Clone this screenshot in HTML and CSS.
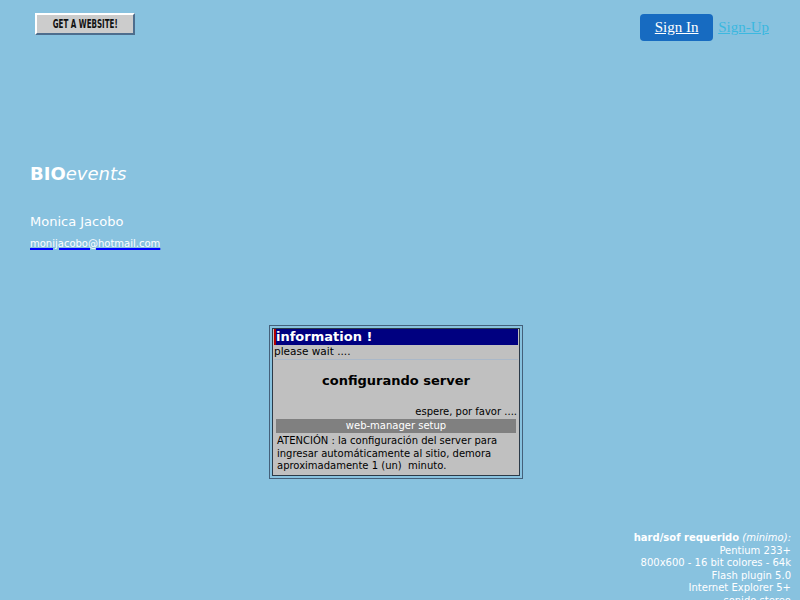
FILE: index.html
```html
<!DOCTYPE html>
<html>
<head>
<meta charset="utf-8">
<link rel="stylesheet" href="styles.css">
</head>
<body>
<div class="page">
  <header class="top">
    <a class="get-site"><span>GET A WEBSITE!</span></a>
    <div class="auth">
      <a class="signin">Sign In</a>
      <a class="signup">Sign-Up</a>
    </div>
  </header>
  <section class="brand">
    <h1 class="logo"><b>BIO</b><i>events</i></h1>
    <p class="name">Monica Jacobo</p>
    <a class="mail">monijacobo@hotmail.com</a>
  </section>
  <div class="dialog-wrap">
    <div class="dialog">
      <div class="dialog-inner">
        <div class="title">information !</div>
        <div class="wait">please wait ....</div>
        <div class="config">configurando server</div>
        <div class="espere">espere, por favor ....</div>
        <div class="setup">web-manager setup</div>
        <div class="atencion">ATENCIÓN : la configuración del server para<br>ingresar automáticamente al sitio, demora<br>aproximadamente 1 (un)&nbsp; minuto.</div>
      </div>
    </div>
  </div>
  <div class="req">
    <b>hard/sof requerido</b> <i>(minimo):</i><br>
    Pentium 233+<br>
    800x600 - 16 bit colores - 64k<br>
    Flash plugin 5.0<br>
    Internet Explorer 5+<br>
    sonido stereo
  </div>
</div>
</body>
</html>
```
FILE: styles.css
```css
html, body {
  margin: 0;
  padding: 0;
  background: #88c2df;
  overflow: hidden;
  height: 600px;
}
.page {
  width: 800px;
  height: 600px;
  font-family: "DejaVu Sans", Verdana, sans-serif;
  color: #fff;
}
.top {
  display: flex;
  justify-content: space-between;
  align-items: flex-start;
  padding: 13px 34px 0 35px;
  height: 41px;
}
.get-site {
  display: flex;
  justify-content: center;
  align-items: center;
  box-sizing: border-box;
  width: 100px;
  height: 22px;
  background: #cccccc;
  border-top: 2px solid #ffffff;
  border-left: 2px solid #ffffff;
  border-right: 2px solid #4d6d8d;
  border-bottom: 2px solid #4d6d8d;
  color: #111;
  overflow: hidden;
}
.get-site span {
  display: inline-block;
  font-family: "DejaVu Sans Condensed", "DejaVu Sans", sans-serif;
  font-weight: bold;
  font-size: 12px;
  line-height: 14px;
  white-space: nowrap;
  transform: scaleX(0.66);
}
.auth {
  display: flex;
  align-items: center;
  gap: 5px;
  margin-top: 1px;
  margin-right: -3px;
}
.signin {
  display: block;
  width: 73px;
  height: 27px;
  line-height: 27px;
  text-align: center;
  background: #176bc1;
  border-radius: 4px;
  font-family: "Liberation Serif", "Times New Roman", serif;
  font-size: 15px;
  color: #fff;
  text-decoration: underline;
}
.signup {
  font-family: "Liberation Serif", "Times New Roman", serif;
  font-size: 15px;
  color: #3bb8e0;
  text-decoration: underline;
}
.brand {
  padding: 109px 0 0 30px;
  height: 162px;
}
.logo {
  margin: 0;
  font-size: 18px;
  line-height: 22px;
  font-weight: normal;
}
.logo b { font-weight: bold; }
.logo i { font-style: italic; }
.name {
  margin: 29px 0 0;
  font-size: 13px;
  line-height: 16px;
}
.mail {
  display: inline-block;
  margin-top: 7px;
  font-size: 10px;
  line-height: 13px;
  color: #fff;
  text-decoration: underline;
  text-decoration-color: #0000ff;
  text-decoration-thickness: 2px;
}
.dialog-wrap {
  padding-left: 269px;
}
.dialog {
  width: 248px;
  height: 148px;
  border: 1px solid #44607a;
  padding: 2px;
  background: #88c2df;
}
.dialog-inner {
  box-sizing: border-box;
  height: 100%;
  border: 1px solid #2b3a48;
  background: #c0c0c0;
  padding: 0 1px;
  color: #000;
}
.title {
  background: #000080;
  color: #fff;
  font-weight: bold;
  font-size: 13px;
  line-height: 16px;
  height: 16px;
  border-left: 2px solid #b00000;
}
.wait {
  font-size: 10.5px;
  line-height: 13px;
  border-bottom: 1px solid #aab8c8;
  height: 14px;
}
.config {
  text-align: center;
  font-weight: bold;
  font-size: 13px;
  line-height: 16px;
  padding-top: 13px;
  height: 32px;
}
.espere {
  text-align: right;
  font-size: 10px;
  line-height: 13px;
  padding-right: 1px;
}
.setup {
  margin: 1px 2px 0;
  background: #808080;
  color: #fff;
  text-align: center;
  font-size: 10px;
  line-height: 14px;
}
.atencion {
  padding: 2px 3px 0;
  font-size: 10px;
  line-height: 12.5px;
  white-space: nowrap;
}
.req {
  margin-top: 53px;
  padding-right: 9px;
  text-align: right;
  font-size: 10px;
  line-height: 12.5px;
}
```
